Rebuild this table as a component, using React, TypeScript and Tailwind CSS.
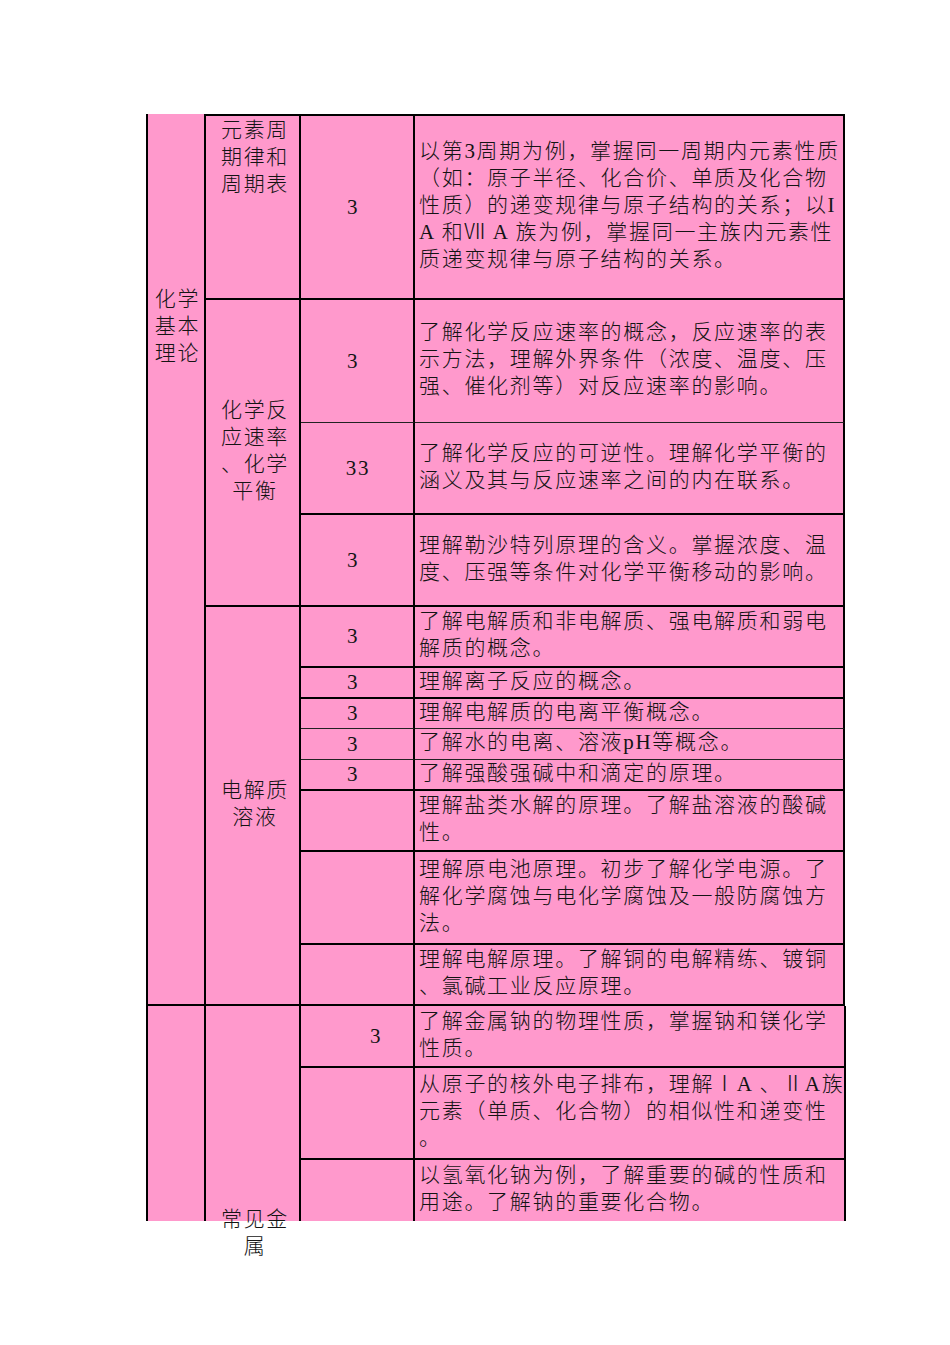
import React from 'react';

type Row = { h: string; num?: string; numCls?: string; lines: string[]; thin?: boolean; last?: boolean };

type Group = { label: string[]; labelMode: 'top' | 'center' | 'bottom'; rows: Row[]; first?: boolean; last?: boolean };

const font = { fontFamily: '"Liberation Serif", "Noto Sans CJK SC", serif' };

const groupsA: Group[] = [
  {
    label: ['元素周', '期律和', '周期表'],
    labelMode: 'top',
    first: true,
    rows: [
      {
        h: 'h-[184px]',
        num: '3',
        lines: [
          '以第3周期为例，掌握同一周期内元素性质',
          '（如：原子半径、化合价、单质及化合物',
          '性质）的递变规律与原子结构的关系；以I',
          'A 和Ⅶ A 族为例，掌握同一主族内元素性',
          '质递变规律与原子结构的关系。',
        ],
      },
    ],
  },
  {
    label: ['化学反', '应速率', '、化学', '平衡'],
    labelMode: 'center',
    rows: [
      {
        h: 'h-[123px]',
        num: '3',
        thin: true,
        lines: ['了解化学反应速率的概念，反应速率的表', '示方法，理解外界条件（浓度、温度、压', '强、催化剂等）对反应速率的影响。'],
      },
      {
        h: 'h-[92px]',
        num: '33',
        numCls: 'pl-[2px]',
        lines: ['了解化学反应的可逆性。理解化学平衡的', '涵义及其与反应速率之间的内在联系。'],
      },
      {
        h: 'h-[92px]',
        num: '3',
        lines: ['理解勒沙特列原理的含义。掌握浓度、温', '度、压强等条件对化学平衡移动的影响。'],
      },
    ],
  },
  {
    label: ['电解质', '溶液'],
    labelMode: 'center',
    rows: [
      { h: 'h-[61px]', num: '3', lines: ['了解电解质和非电解质、强电解质和弱电', '解质的概念。'] },
      { h: 'h-[31px]', num: '3', lines: ['理解离子反应的概念。'] },
      { h: 'h-[30px]', num: '3', thin: true, lines: ['理解电解质的电离平衡概念。'] },
      { h: 'h-[31px]', num: '3', thin: true, lines: ['了解水的电离、溶液pH等概念。'] },
      { h: 'h-[31px]', num: '3', lines: ['了解强酸强碱中和滴定的原理。'] },
      { h: 'h-[61px]', lines: ['理解盐类水解的原理。了解盐溶液的酸碱', '性。'] },
      { h: 'h-[93px]', lines: ['理解原电池原理。初步了解化学电源。了', '解化学腐蚀与电化学腐蚀及一般防腐蚀方', '法。'] },
      { h: 'h-[61px]', lines: ['理解电解原理。了解铜的电解精练、镀铜', '、氯碱工业反应原理。'] },
    ],
  },
];

const groupB: Group = {
  label: ['常见金', '属'],
  labelMode: 'bottom',
  last: true,
  rows: [
    { h: 'h-[62px]', num: '3', numCls: 'pl-[38px]', lines: ['了解金属钠的物理性质，掌握钠和镁化学', '性质。'] },
    { h: 'h-[92px]', lines: ['从原子的核外电子排布，理解ⅠA 、ⅡA族', '元素（单质、化合物）的相似性和递变性', '。'] },
    { h: 'h-[61px]', last: true, lines: ['以氢氧化钠为例，了解重要的碱的性质和', '用途。了解钠的重要化合物。'] },
  ],
};

function Lines({ lines, className = '' }: { lines: string[]; className?: string }) {
  return (
    <div className={className}>
      {lines.map((l, i) => (
        <div key={i} className="whitespace-nowrap">
          {l}
        </div>
      ))}
    </div>
  );
}

function DataRow({ row }: { row: Row }) {
  const bottom = row.last ? '' : row.thin ? 'border-b border-[#222]' : 'border-b-2 border-black';
  return (
    <div className={`flex ${row.h}`}>
      <div className={`w-[114px] shrink-0 flex items-center justify-center border-r-2 border-r-black ${bottom}`}>
        {row.num && <span className={row.numCls ?? 'pr-[8px]'}>{row.num}</span>}
      </div>
      <div className={`flex-1 flex items-center pl-[4px] pb-[3px] border-r-2 border-r-black ${bottom}`}>
        <Lines lines={row.lines} />
      </div>
    </div>
  );
}

function GroupBlock({ g }: { g: Group }) {
  const labelPos =
    g.labelMode === 'top' ? 'justify-start pt-px' : g.labelMode === 'center' ? 'justify-center pb-[3px]' : 'justify-end';
  return (
    <div className={`flex ${g.first ? 'border-t-2 border-black' : ''}`}>
      <div
        className={`w-[95px] shrink-0 flex flex-col items-center text-center border-r-2 border-black ${
          g.last ? '' : 'border-b-2'
        } ${labelPos}`}
      >
        <Lines lines={g.label} className={g.labelMode === 'bottom' ? '-mb-[39px] pl-[5px]' : 'pl-[5px]'} />
      </div>
      <div className="flex-1 flex flex-col">
        {g.rows.map((r, i) => (
          <DataRow key={i} row={r} />
        ))}
      </div>
    </div>
  );
}

export default function App() {
  return (
    <div className="w-[950px] min-h-[1345px] bg-white text-[#141414]" style={font}>
      <div className="ml-[146px] pt-[114px] w-[699px] text-[21px] leading-[27px] tracking-[1.7px] font-light">
        <div className="flex bg-[#ff99cc]">
          <div className="w-[60px] shrink-0 border-l-2 border-r-2 border-b-2 border-black pt-[172px] pl-[3px] text-center">
            <Lines lines={['化学', '基本', '理论']} />
          </div>
          <div className="flex-1 flex flex-col">
            {groupsA.map((g, i) => (
              <GroupBlock key={i} g={g} />
            ))}
          </div>
        </div>
        <div className="flex bg-[#ff99cc]">
          <div className="w-[60px] shrink-0 border-l-2 border-r-2 border-black" />
          <div className="flex-1 flex flex-col">
            <GroupBlock g={groupB} />
          </div>
        </div>
      </div>
    </div>
  );
}
